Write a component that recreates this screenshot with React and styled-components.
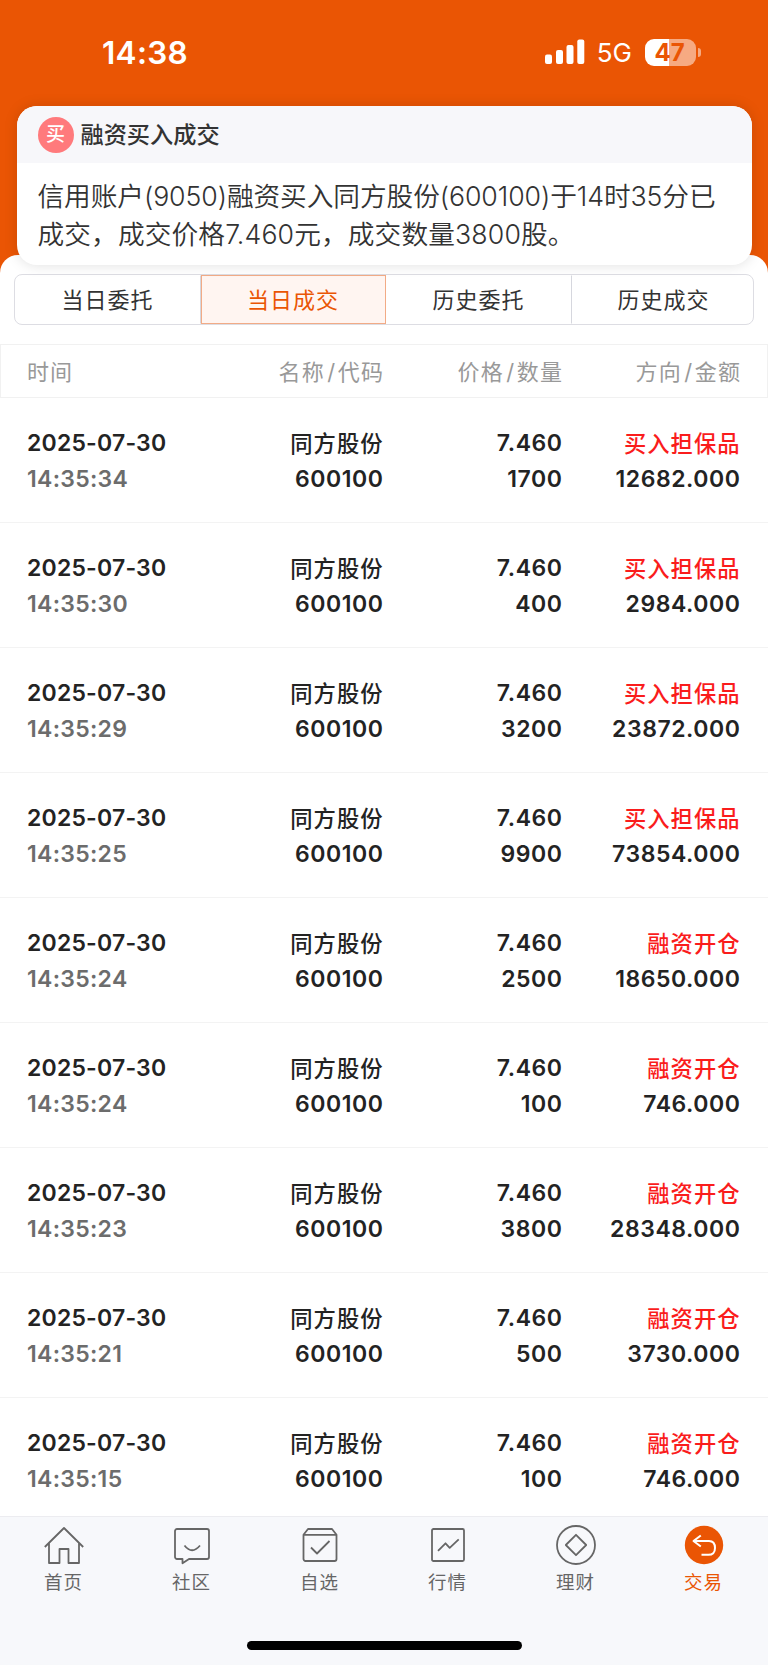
import React, {useState} from "react";
import styled, {createGlobalStyle} from 'styled-components';


const GlobalStyle = createGlobalStyle`
  * {
    box-sizing: border-box;
  }

  body {
    margin: 0;
    background: #ea5504;
    font-family: Inter, "Noto Sans CJK SC", sans-serif;
    color: #232323;
  }
`

const Page = styled.div`
  position: relative;
  display: flex;
  flex-direction: column;
  width: 768px;
  height: 1665px;
  overflow: hidden;
  background: #ea5504;
`

const StatusBar = styled.div`
  display: flex;
  align-items: center;
  justify-content: space-between;
  flex: none;
  height: 255px;
  padding: 0 67px 151px 102px;
  color: #fff;
`

const Clock = styled.div`
  font-size: 31.5px;
  font-weight: 600;
  letter-spacing: 0.3px;
`

const StatusIcons = styled.div`
  display: flex;
  align-items: center;
`

const Network = styled.span`
  margin: 1px 13px 0 12px;
  font-size: 26px;
  letter-spacing: 0;
`

const Battery = styled.div`
  display: flex;
  align-items: center;
  justify-content: center;
  width: 51px;
  height: 27px;
  padding-right: 2px;
  border-radius: 9px;
  background: linear-gradient(90deg, #fff 47%, #f6aa82 47%);
  color: #ea5504;
  font-size: 24px;
  font-weight: 700;
`

const BatteryTip = styled.div`
  width: 3px;
  height: 9px;
  margin-left: 2px;
  border-radius: 0 4px 4px 0;
  background: #f6aa82;
`

const Notice = styled.div`
  position: absolute;
  top: 106px;
  left: 16.5px;
  width: 735px;
  height: 159px;
  border-radius: 20px;
  background: #fff;
  box-shadow: 0 0 14px rgba(0, 0, 0, 0.13);
  overflow: hidden;
`

const NoticeHeader = styled.div`
  display: flex;
  align-items: center;
  height: 57px;
  padding-left: 21px;
  background: #f7f7fa;
`

const NoticeBadge = styled.div`
  width: 36px;
  height: 36px;
  margin-right: 7px;
  border-radius: 50%;
  background: #ff7a7c;
  color: #fff;
  font-size: 19px;
  font-weight: 500;
  line-height: 36px;
  text-align: center;
`

const NoticeTitle = styled.div`
  padding-bottom: 4px;
  font-size: 23.2px;
  font-weight: 500;
  color: #333;
`

const NoticeText = styled.div`
  padding: 15px 20px 0 21px;
  font-size: 26.7px;
  font-weight: 350;
  line-height: 37.6px;
  white-space: nowrap;
  color: #333;
`

const NoticeLine = styled.div`
  letter-spacing: ${props => props.$spacing};
`

const Sheet = styled.div`
  display: flex;
  flex-direction: column;
  flex: 1;
  min-height: 0;
  padding-top: 19px;
  border-radius: 18px 18px 0 0;
  background: #fff;
`

const Tabs = styled.div`
  display: grid;
  grid-template-columns: 186px 185px 186px 1fr;
  flex: none;
  height: 51px;
  margin: 0 14px;
  border: 1px solid #dddde3;
  border-radius: 8px;
  overflow: hidden;
`

const Tab = styled.button`
  padding: 0 1px 3px 0;
  border: 1px solid ${props => props.$active ? "#f2ab86" : "transparent"};
  border-right-color: ${props => props.$active ? "#f2ab86" : props.$last ? "transparent" : "#d6d7de"};
  background: ${props => props.$active ? "#fff5f1" : "transparent"};
  color: ${props => props.$active ? "#ea5504" : "#333"};
  font-family: inherit;
  font-size: 22px;
  letter-spacing: 1px;
  text-indent: ${props => props.$last ? "3px" : "0"};
`

const columns = `
  display: grid;
  grid-template-columns: 1fr 178px 179px 178px;
  padding: 0 28px 0 27px;
`

const TableHead = styled.div`
  ${columns}
  align-items: center;
  flex: none;
  height: 54px;
  margin-top: 19px;
  padding: 0 27px 3px 26px;
  border: 1px solid #f1f1f1;
  font-size: 22px;
  letter-spacing: 1.1px;
  color: #999;
`

const HeadCell = styled.div`
  margin-right: -1px;
  text-align: ${props => props.$right ? "right" : "left"};
`

const Slash = styled.span`
  margin: 0 1.500px 0 2.500px;
`

const List = styled.div`
  flex: 1;
  min-height: 0;
  overflow: hidden;
`

const Row = styled.div`
  ${columns}
  height: 125px;
  padding-top: 27px;
  border-bottom: 1px solid #f3f3f3;
`

const Cell = styled.div`
  display: flex;
  flex-direction: column;
  margin-right: -0.5px;
  text-align: ${props => props.$right ? "right" : "left"};
  font-size: 23px;
  font-weight: 600;
  line-height: 36px;
  letter-spacing: 0.55px;
`

const DateText = styled.span`
  letter-spacing: 0.2px;
`

const Time = styled.span`
  font-weight: 600;
  letter-spacing: 0.3px;
  color: #6c6c6c;
`

const Label = styled.span`
  padding-top: 1px;
  font-size: 22.3px;
  font-weight: 500;
  line-height: 35px;
  letter-spacing: 1px;
  color: ${props => props.$red ? "#fa1c1c" : "inherit"};
`

const NavBar = styled.div`
  flex: none;
  height: 149px;
  border-top: 1px solid #ececf0;
  background: #f7f8fb;
`

const NavItems = styled.div`
  display: grid;
  grid-template-columns: repeat(6, 1fr);
  height: 124px;
`

const NavItem = styled.div`
  display: flex;
  flex-direction: column;
  align-items: center;
  padding: 8px 1px 0 0;
  font-size: 18.5px;
  line-height: 34px;
  letter-spacing: 1px;
  color: ${props => props.$active ? "#ea5504" : "#666"};
`

const NavIcon = styled.svg`
  width: 40px;
  height: 40px;
  fill: none;
  stroke: #666;
  stroke-width: 1.8;
  stroke-linejoin: round;
`

const HomeIndicator = styled.div`
  width: 275px;
  height: 9px;
  margin: 0 auto;
  border-radius: 5px;
  background: #000;
`

const tabs = ["当日委托", "当日成交", "历史委托", "历史成交"]

const trades = [
    {time: "14:35:34", amount: "1700", side: "买入担保品", total: "12682.000"},
    {time: "14:35:30", amount: "400", side: "买入担保品", total: "2984.000"},
    {time: "14:35:29", amount: "3200", side: "买入担保品", total: "23872.000"},
    {time: "14:35:25", amount: "9900", side: "买入担保品", total: "73854.000"},
    {time: "14:35:24", amount: "2500", side: "融资开仓", total: "18650.000"},
    {time: "14:35:24", amount: "100", side: "融资开仓", total: "746.000"},
    {time: "14:35:23", amount: "3800", side: "融资开仓", total: "28348.000"},
    {time: "14:35:21", amount: "500", side: "融资开仓", total: "3730.000"},
    {time: "14:35:15", amount: "100", side: "融资开仓", total: "746.000"},
]

const navItems = [
    {
        name: "首页",
        icon: <path d="M.8 22 20 3l19.2 19M5 18.5V38h10.500V24h9v14H35V18.500"/>
    },
    {
        name: "社区",
        icon: <path d="M5 4h30a2 2 0 0 1 2 2v26a2 2 0 0 1-2 2H17l-6.500 4.300V34H5a2 2 0 0 1-2-2V6a2 2 0 0 1 2-2zM12.500 20.500q7.500 9.500 15.500 0"/>
    },
    {
        name: "自选",
        icon: <path d="M3.500 9.800 8 4h24l4.500 5.800V34a2 2 0 0 1-2 2h-29a2 2 0 0 1-2-2zM3.500 9.800h33M11 22.500l6 6L29.500 16"/>
    },
    {
        name: "行情",
        icon: <path d="M5.500 4h29a1.500 1.500 0 0 1 1.500 1.500v29a1.500 1.500 0 0 1-1.500 1.500h-29A1.500 1.500 0 0 1 4 34.500v-29A1.500 1.500 0 0 1 5.500 4zM10 25.800l7.500-7.500 4.200 4.500 9-8.500"/>
    },
    {
        name: "理财",
        icon: <path d="M20 1a19 19 0 1 1 0 38 19 19 0 0 1 0-38zM20 9.800 30.200 20 20 30.200 9.800 20z"/>
    },
    {
        name: "交易",
        icon: <>
            <circle cx="20" cy="20" r="19.200" fill="#ea5504" stroke="none"/>
            <path d="M16.800 10.500 9.500 16l7.300 5.500M9.500 16H25q6 0 6 7t-7 6.800h-6.500" stroke="#fff" strokeWidth="2"/>
        </>
    },
]


const SignalIcon = () => (
    <svg width="40" height="26" viewBox="0 0 40 26" fill="#fff">
        <rect x="0" y="15.500" width="7" height="9.500" rx="2"/>
        <rect x="11" y="11" width="7" height="14" rx="2"/>
        <rect x="21.500" y="6" width="7" height="19" rx="2"/>
        <rect x="32.300" y="0.500" width="7" height="24.500" rx="2"/>
    </svg>
)


const TradeRow = ({trade}) => (
    <Row>
        <Cell>
            <DateText>2025-07-30</DateText>
            <Time>{trade.time}</Time>
        </Cell>
        <Cell $right>
            <Label>同方股份</Label>
            <span>600100</span>
        </Cell>
        <Cell $right>
            <span>7.460</span>
            <span>{trade.amount}</span>
        </Cell>
        <Cell $right>
            <Label $red>{trade.side}</Label>
            <span>{trade.total}</span>
        </Cell>
    </Row>
)


const App = () => {

    const [active, setActive] = useState(1)

    return (
        <Page>
            <GlobalStyle/>
            <StatusBar>
                <Clock>14:38</Clock>
                <StatusIcons>
                    <SignalIcon/>
                    <Network>5G</Network>
                    <Battery>47</Battery>
                    <BatteryTip/>
                </StatusIcons>
            </StatusBar>
            <Sheet>
                <Tabs>
                    {tabs.map((tab, i) => (
                        <Tab
                            key={tab}
                            $active={i === active}
                            $last={i === tabs.length - 1}
                            onClick={() => setActive(i)}
                        >{tab}</Tab>
                    ))}
                </Tabs>
                <TableHead>
                    <HeadCell>时间</HeadCell>
                    <HeadCell $right>名称<Slash>/</Slash>代码</HeadCell>
                    <HeadCell $right>价格<Slash>/</Slash>数量</HeadCell>
                    <HeadCell $right>方向<Slash>/</Slash>金额</HeadCell>
                </TableHead>
                <List>
                    {trades.map((trade, i) => <TradeRow key={i} trade={trade}/>)}
                </List>
                <NavBar>
                    <NavItems>
                        {navItems.map(item => (
                            <NavItem key={item.name} $active={item.name === "交易"}>
                                <NavIcon viewBox="0 0 40 40">{item.icon}</NavIcon>
                                {item.name}
                            </NavItem>
                        ))}
                    </NavItems>
                    <HomeIndicator/>
                </NavBar>
            </Sheet>
            <Notice>
                <NoticeHeader>
                    <NoticeBadge>买</NoticeBadge>
                    <NoticeTitle>融资买入成交</NoticeTitle>
                </NoticeHeader>
                <NoticeText>
                    <NoticeLine $spacing="-0.08px">信用账户(9050)融资买入同方股份(600100)于14时35分已</NoticeLine>
                    <NoticeLine $spacing="0.12px">成交，成交价格7.460元，成交数量3800股。</NoticeLine>
                </NoticeText>
            </Notice>
        </Page>
    )
}

export default App
